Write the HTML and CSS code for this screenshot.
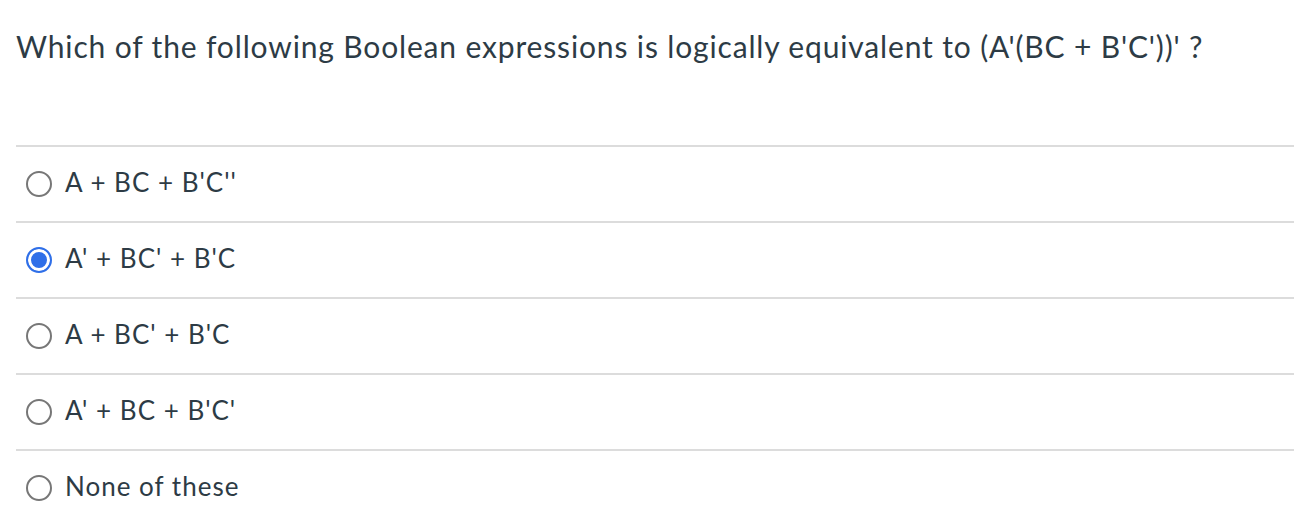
FILE: index.html
```html
<!DOCTYPE html>
<html>
<head>
<meta charset="utf-8">
<link rel="stylesheet" href="styles.css">
</head>
<body>
<div class="question">
  <div class="question-text">Which of the following Boolean expressions is logically equivalent to (A'(BC + B'C'))' ?</div>
  <div class="answers">
    <label class="answer"><span class="radio"></span><span class="answer-text">A + BC + B'C''</span></label>
    <label class="answer"><span class="radio checked"></span><span class="answer-text">A' + BC' + B'C</span></label>
    <label class="answer"><span class="radio"></span><span class="answer-text">A + BC' + B'C</span></label>
    <label class="answer"><span class="radio"></span><span class="answer-text">A' + BC + B'C'</span></label>
    <label class="answer"><span class="radio"></span><span class="answer-text">None of these</span></label>
  </div>
</div>
</body>
</html>
```

FILE: styles.css
```css
html, body {
  margin: 0;
  padding: 0;
  background: #ffffff;
}
body {
  font-family: Lato, "Open Sans", sans-serif;
  color: #2d3b45;
}
.question {
  padding-left: 16px;
}
.question-text {
  font-size: 30px;
  line-height: 36px;
  letter-spacing: 0.85px;
  padding-top: 28px;
  height: 145px;
  box-sizing: border-box;
}
.answers {
  display: flex;
  flex-direction: column;
}
.answer {
  display: flex;
  align-items: center;
  height: 74px;
  border-top: 2px solid #dcdcdc;
  padding-left: 10px;
}
.radio {
  width: 26px;
  height: 26px;
  box-sizing: border-box;
  border: 2px solid #777777;
  border-radius: 50%;
  flex: none;
  margin-right: 13px;
}
.radio.checked {
  border: 2px solid #2f6fe8;
  background: #2f6fe8;
  box-shadow: inset 0 0 0 3px #ffffff;
}
.answer-text {
  font-size: 26px;
  line-height: 30px;
  letter-spacing: 1px;
  margin-bottom: 4px;
}
```
